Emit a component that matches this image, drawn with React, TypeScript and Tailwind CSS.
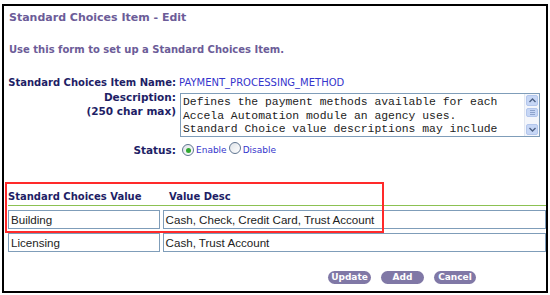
import React from "react";

const Radio: React.FC<{ checked?: boolean }> = ({ checked }) => (
  <span className="inline-flex w-[12px] h-[12px] rounded-full border border-[#5f7590] bg-gradient-to-br from-[#dfe3e8] to-white items-center justify-center">
    {checked && <span className="w-[5px] h-[5px] rounded-full bg-[#2fa82f]" />}
  </span>
);

const ScrollBar: React.FC = () => (
  <div className="w-[15px] h-full flex flex-col bg-[#f4f6fb] border-l border-[#e3e8f2]">
    <div className="h-[11px] mx-[1px] mt-[1px] rounded-[2px] bg-[#c6d6f5] border border-[#b3c6ec] flex items-center justify-center">
      <svg width="7" height="5" viewBox="0 0 7 5">
        <path d="M0.5 4 L3.5 1 L6.5 4" fill="none" stroke="#4d6185" strokeWidth="1.4" />
      </svg>
    </div>
    <div className="h-[9px] mx-[1px] mt-[2px] rounded-[2px] bg-[#c6d6f5] border border-[#b3c6ec] flex flex-col items-center justify-center gap-[1px]">
      <span className="w-[5px] h-px bg-[#8ea3cc]" />
      <span className="w-[5px] h-px bg-[#8ea3cc]" />
      <span className="w-[5px] h-px bg-[#8ea3cc]" />
    </div>
    <div className="flex-1" />
    <div className="h-[11px] mx-[1px] mb-[1px] rounded-[2px] bg-[#c6d6f5] border border-[#b3c6ec] flex items-center justify-center">
      <svg width="7" height="5" viewBox="0 0 7 5">
        <path d="M0.5 1 L3.5 4 L6.5 1" fill="none" stroke="#4d6185" strokeWidth="1.4" />
      </svg>
    </div>
  </div>
);

const Btn: React.FC<{ label: string; w: string }> = ({ label, w }) => (
  <span className={`${w} h-[13px] rounded-full bg-[#8078a6] text-white text-[9px] font-bold leading-[13px] text-center`}>
    {label}
  </span>
);

export default function App() {
  return (
    <div className="w-[550px] h-[295px] bg-white pt-[4px] pl-[2px]">
      <div className="relative w-[546px] h-[289px] border-2 border-black overflow-hidden font-['DejaVu_Sans',sans-serif]">
        <div className="mt-[5px] ml-[5px] h-[14px] leading-[14px] text-[11px] font-bold text-[#6c5c98]">
          Standard Choices Item - Edit
        </div>
        <div className="mt-[18px] ml-[5px] h-[14px] leading-[14px] text-[10px] font-bold text-[#6c5c98]">
          Use this form to set up a Standard Choices Item.
        </div>

        <div className="mt-[19px] flex h-[14px] leading-[14px]">
          <div className="w-[172px] text-right text-[10px] font-bold text-[#1e1e66] whitespace-nowrap">Standard Choices Item Name:</div>
          <div className="ml-[3px] text-[10px] text-[#3535cc]">PAYMENT_PROCESSING_METHOD</div>
        </div>

        <div className="flex items-start">
          <div className="w-[172px] text-right text-[10.5px] font-bold text-[#1e1e66] leading-[14px] whitespace-nowrap">
            <div>Description:</div>
            <div>(250 char max)</div>
          </div>
          <div className="ml-[4px] mt-[3px] w-[360px] h-[44px] border border-[#7f9db9] bg-white flex">
            <div className="flex-1 pl-[2px] pt-[2px] font-['Liberation_Mono',monospace] text-[11.4px] leading-[13.5px] text-[#222] whitespace-pre overflow-hidden">
              {"Defines the payment methods available for each\nAccela Automation module an agency uses.\nStandard Choice value descriptions may include"}
            </div>
            <ScrollBar />
          </div>
        </div>

        <div className="mt-[6px] flex items-center h-[14px] leading-[14px]">
          <div className="w-[172px] text-right text-[10.5px] font-bold text-[#1e1e66]">Status:</div>
          <div className="ml-[6px] flex items-center text-[9px] text-[#3535cc]">
            <Radio checked />
            <span className="ml-[2px]">Enable</span>
            <span className="ml-[2px]"><Radio /></span>
            <span className="ml-[2px]">Disable</span>
          </div>
        </div>

        <div className="mt-[33px] ml-[4px] flex h-[16px] leading-[14px] border-b border-[#8cc152] text-[10px] font-bold text-[#1e1e66]">
          <div className="w-[161px]">Standard Choices Value</div>
          <div>Value Desc</div>
        </div>

        <div className="mt-[4px] ml-[4px] flex flex-col gap-[4px] font-['Liberation_Sans',sans-serif] text-[11.6px] text-[#222]">
          {[
            ["Building", "Cash, Check, Credit Card, Trust Account"],
            ["Licensing", "Cash, Trust Account"],
          ].map(([a, b]) => (
            <div key={a} className="flex gap-[3px]">
              <div className="w-[158px] h-[19px] border border-[#7f9db9] pl-[2px] leading-[17px]">{a}</div>
              <div className="w-[400px] h-[19px] border border-[#7f9db9] pl-[2px] leading-[17px]">{b}</div>
            </div>
          ))}
        </div>

        <div className="mt-[19px] ml-[324px] flex gap-[10px]">
          <Btn label="Update" w="w-[43px]" />
          <Btn label="Add" w="w-[43px]" />
          <Btn label="Cancel" w="w-[42px]" />
        </div>

        <div className="absolute left-[1px] top-[176px] w-[379px] h-[51px] border-2 border-[#ff2a2a]" />
      </div>
    </div>
  );
}
